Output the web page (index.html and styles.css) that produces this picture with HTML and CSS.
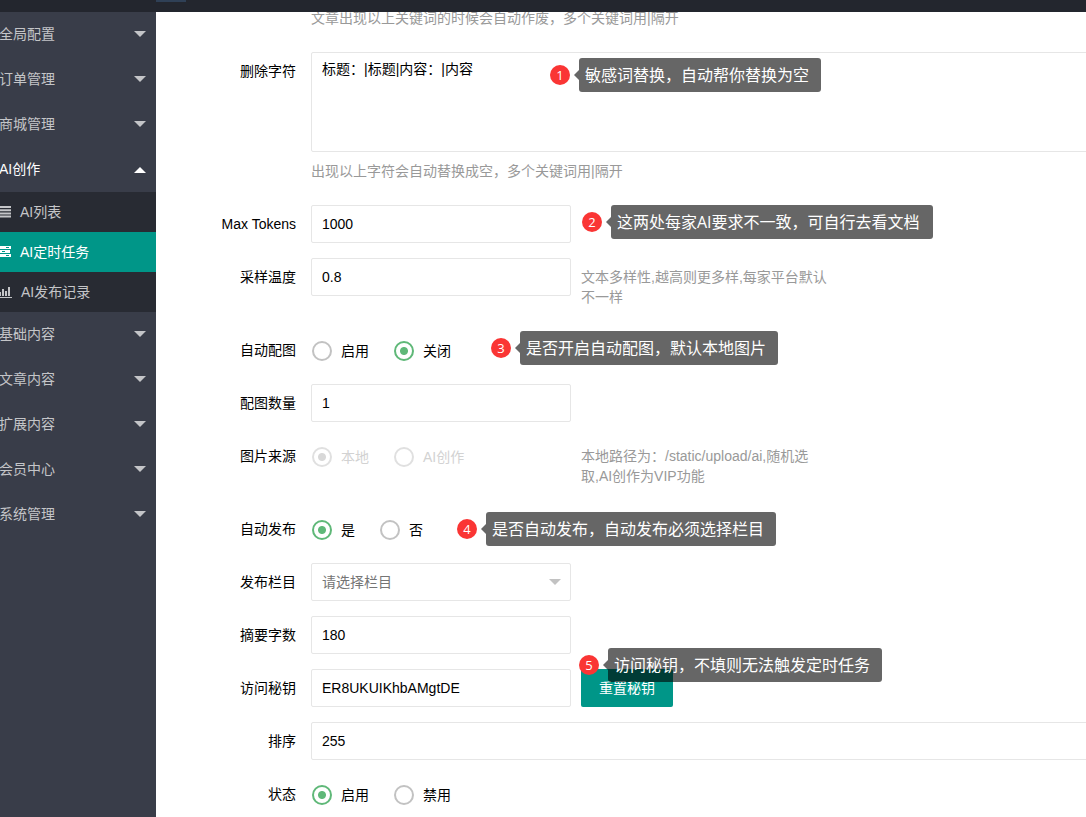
FILE: index.html
```html
<!DOCTYPE html>
<html lang="zh-CN">
<head>
  <meta charset="UTF-8" />
  <title>AI定时任务</title>
  <link rel="stylesheet" href="styles.css">
</head>
<body>
  <div class="header"><div class="header-bar"></div></div>

  <div class="layout">
    <div class="side">
      <div class="nav-item">全局配置<span class="more"></span></div>
      <div class="nav-item">订单管理<span class="more"></span></div>
      <div class="nav-item">商城管理<span class="more"></span></div>
      <div class="nav-item open">AI创作<span class="more"></span></div>
      <div class="nav-child">
        <div class="child-item">
          <svg class="icon" width="12" height="14" viewBox="0 0 12 14"><path d="M0 2h11M0 5.2h11M0 8.4h11M0 11.6h11" stroke="currentColor" stroke-width="2"/></svg>
          <span>AI列表</span>
        </div>
        <div class="child-item active">
          <svg class="icon" width="12" height="14" viewBox="0 0 12 14"><path d="M0 1h11v3H0zM0 5h10v3H0zM0 9h11v3H0z" fill="currentColor"/><path d="M6 2.5h3M2 6.5h3M6 10.5h3" stroke="#009688"/></svg>
          <span>AI定时任务</span>
        </div>
        <div class="child-item">
          <svg class="icon wide" width="14" height="14" viewBox="0 0 14 14"><path d="M0 12.5h12" stroke="currentColor"/><path d="M0 7h1v4H0zM2 4h2v7H2zM5 6h2v5H5zM8 2h2v9H8z" fill="currentColor"/></svg>
          <span>AI发布记录</span>
        </div>
      </div>
      <div class="nav-item">基础内容<span class="more"></span></div>
      <div class="nav-item">文章内容<span class="more"></span></div>
      <div class="nav-item">扩展内容<span class="more"></span></div>
      <div class="nav-item">会员中心<span class="more"></span></div>
      <div class="nav-item">系统管理<span class="more"></span></div>
    </div>

    <div class="main">
      <div class="form">
        <div class="form-item first">
          <div class="label"></div>
          <div class="block"><div class="aux">文章出现以上关键词的时候会自动作废，多个关键词用|隔开</div></div>
        </div>
        <div class="form-item">
          <div class="label">删除字符</div>
          <div class="block">
            <div class="textarea">标题：|标题|内容：|内容</div>
            <div class="aux">出现以上字符会自动替换成空，多个关键词用|隔开</div>
          </div>
        </div>
        <div class="form-item">
          <div class="label">Max Tokens</div>
          <div class="input">1000</div>
        </div>
        <div class="form-item">
          <div class="label">采样温度</div>
          <div class="input">0.8</div>
          <div class="aux side-aux">文本多样性,越高则更多样,每家平台默认<br>不一样</div>
        </div>
        <div class="form-item">
          <div class="label">自动配图</div>
          <div class="radios">
            <div class="radio"><i></i>启用</div>
            <div class="radio checked"><i></i>关闭</div>
          </div>
        </div>
        <div class="form-item">
          <div class="label">配图数量</div>
          <div class="input">1</div>
        </div>
        <div class="form-item">
          <div class="label">图片来源</div>
          <div class="radios half">
            <div class="radio checked disabled"><i></i>本地</div>
            <div class="radio disabled"><i></i>AI创作</div>
          </div>
          <div class="aux side-aux">本地路径为：/static/upload/ai,随机选<br>取,AI创作为VIP功能</div>
        </div>
        <div class="form-item">
          <div class="label">自动发布</div>
          <div class="radios">
            <div class="radio checked"><i></i>是</div>
            <div class="radio"><i></i>否</div>
          </div>
        </div>
        <div class="form-item">
          <div class="label">发布栏目</div>
          <div class="input select">请选择栏目<span class="edge"></span></div>
        </div>
        <div class="form-item">
          <div class="label">摘要字数</div>
          <div class="input">180</div>
        </div>
        <div class="form-item">
          <div class="label">访问秘钥</div>
          <div class="input">ER8UKUIKhbAMgtDE</div>
          <div class="btn">重置秘钥</div>
        </div>
        <div class="form-item">
          <div class="label">排序</div>
          <div class="input full">255</div>
        </div>
        <div class="form-item">
          <div class="label">状态</div>
          <div class="radios">
            <div class="radio checked"><i></i>启用</div>
            <div class="radio"><i></i>禁用</div>
          </div>
        </div>
      </div>

      <div class="note note-1"><span class="num">1</span><span class="tip">敏感词替换，自动帮你替换为空</span></div>
      <div class="note note-2"><span class="num">2</span><span class="tip">这两处每家AI要求不一致，可自行去看文档</span></div>
      <div class="note note-3"><span class="num">3</span><span class="tip">是否开启自动配图，默认本地图片</span></div>
      <div class="note note-4"><span class="num">4</span><span class="tip">是否自动发布，自动发布必须选择栏目</span></div>
      <div class="note note-5"><span class="num">5</span><span class="tip">访问秘钥，不填则无法触发定时任务</span></div>
    </div>
  </div>
</body>
</html>
```
FILE: styles.css
```css
* {
  box-sizing: border-box;
}

body {
  margin: 0;
  height: 100vh;
  overflow: hidden;
  display: flex;
  flex-direction: column;
  font: 14px/20px "Liberation Sans", "Noto Sans CJK SC", sans-serif;
  color: #000;
  background: #fff;
}

.header {
  height: 12px;
  flex: none;
  background: #23262e;
}

.header-bar {
  width: 30px;
  height: 2px;
  margin-left: 156px;
  background: #2f4056;
}

.layout {
  flex: 1;
  min-height: 0;
  display: flex;
}

/* sidebar */
.side {
  width: 156px;
  flex: none;
  overflow: hidden;
  background: #393d49;
  color: #c4c5c8;
}

.nav-item {
  height: 45px;
  line-height: 43px;
  margin-left: -1px;
  padding-right: 10px;
  display: flex;
  justify-content: space-between;
  align-items: center;
  white-space: nowrap;
}

.more {
  margin-bottom: 2px;
  border: 6px solid transparent;
  border-top-color: #c4c5c8;
  border-bottom: 0;
}

.nav-item.open {
  color: #fff;
}

.nav-item.open .more {
  margin-bottom: 0;
  border-top: 0;
  border-bottom: 6px solid #fff;
}

.nav-child {
  background: #282b33;
}

.child-item {
  height: 40px;
  line-height: 40px;
  display: flex;
  align-items: center;
}

.child-item.active {
  background: #009688;
  color: #fff;
}

.icon {
  margin-right: 8px;
  flex: none;
}

.icon.wide {
  margin-right: 7px;
}

/* form */
.main {
  flex: 1;
  min-width: 0;
  position: relative;
  overflow: hidden;
}

.form-item {
  display: flex;
  margin-bottom: 15px;
}

.form-item.first {
  margin-top: -13px;
}

.label {
  width: 155px;
  flex: none;
  padding: 9px 15px 9px 0;
  text-align: right;
}

.block {
  flex: 1;
}

.input {
  width: 260px;
  height: 38px;
  line-height: 36px;
  padding-left: 10px;
  border: 1px solid #e6e6e6;
  border-radius: 2px;
}

.input.full {
  width: auto;
  flex: 1;
  margin-right: -4px;
}

.textarea {
  height: 100px;
  padding: 6px 10px;
  margin-right: -4px;
  border: 1px solid #e6e6e6;
  border-radius: 2px;
}

.select {
  display: flex;
  justify-content: space-between;
  align-items: center;
  padding-right: 9px;
  color: #757575;
}

.edge {
  border: 6px solid transparent;
  border-top-color: #c2c2c2;
  border-bottom: 0;
}

.aux {
  padding: 9px 0;
  color: #999;
}

.side-aux {
  margin-left: 10px;
}

.btn {
  width: 92px;
  height: 38px;
  line-height: 38px;
  margin-left: 10px;
  text-align: center;
  color: #fff;
  background: #009688;
  border-radius: 2px;
}

.radios {
  display: flex;
  gap: 24px;
  padding-top: 6px;
}

.radios.half {
  width: 260px;
}

.radio {
  height: 28px;
  line-height: 28px;
  display: flex;
  align-items: center;
}

.radio i {
  width: 20px;
  height: 20px;
  margin: 0 9px 0 1px;
  border: 2px solid #c2c2c2;
  border-radius: 50%;
}

.radio.checked i {
  border-color: #5fb878;
  background: radial-gradient(circle, #5fb878 3.5px, transparent 4.5px);
}

.radio.disabled {
  color: #d2d2d2;
}

.radio.disabled i {
  border-color: #e0e0e0;
}

.radio.disabled.checked i {
  background: radial-gradient(circle, #d8d8d8 3.5px, transparent 4.5px);
}

/* numbered notes over the form */
.note {
  position: absolute;
  display: flex;
  align-items: center;
  gap: 9px;
  color: #fff;
  font-family: "Open Sans", "Noto Sans CJK SC", sans-serif;
}

.num {
  width: 20px;
  height: 20px;
  border-radius: 50%;
  background: #fa3534;
  font-size: 13px;
  text-align: center;
}

.tip {
  position: relative;
  height: 34px;
  line-height: 34px;
  padding: 0 12px 0 6px;
  border-radius: 3px;
  background: rgba(0, 0, 0, 0.6);
  font-size: 16px;
  white-space: nowrap;
}

.tip::before {
  content: "";
  position: absolute;
  left: -5px;
  top: 12px;
  border: 5px solid transparent;
  border-right-color: rgba(0, 0, 0, 0.6);
  border-left: 0;
}

.note-1 {
  left: 394px;
  top: 46px;
}

.note-2 {
  left: 426px;
  top: 193px;
}

.note-2 .tip {
  padding-right: 13px;
}

.note-3 {
  left: 335px;
  top: 319px;
}

.note-4 {
  left: 301px;
  top: 500px;
}

.note-5 {
  left: 423px;
  top: 636px;
}
```
